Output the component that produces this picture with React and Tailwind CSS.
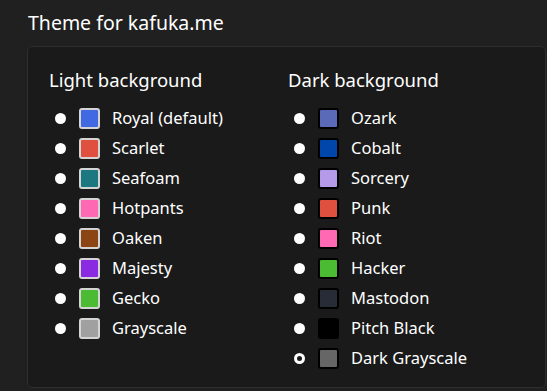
import React from "react";

const light = [
  { name: "Royal (default)", color: "#4169e1" },
  { name: "Scarlet", color: "#e0503f" },
  { name: "Seafoam", color: "#1b7780" },
  { name: "Hotpants", color: "#ff69b4" },
  { name: "Oaken", color: "#8b4513" },
  { name: "Majesty", color: "#8a2be2" },
  { name: "Gecko", color: "#4cbb34" },
  { name: "Grayscale", color: "#a0a0a0" },
];

const dark = [
  { name: "Ozark", color: "#5a69b8" },
  { name: "Cobalt", color: "#0046ab" },
  { name: "Sorcery", color: "#b49ae8" },
  { name: "Punk", color: "#e0503f" },
  { name: "Riot", color: "#ff69b4" },
  { name: "Hacker", color: "#4cbb34" },
  { name: "Mastodon", color: "#282c37" },
  { name: "Pitch Black", color: "#000000" },
  { name: "Dark Grayscale", color: "#666666", selected: true },
];

const Option = ({ item, isDark }) => (
  <div className="flex items-center h-[30px]">
    <div className="w-[24px] flex justify-center ml-[-1px]">
      {item.selected ? (
        <span className="w-[11px] h-[11px] rounded-full border-[3px] border-white bg-[#1a1a1a]" />
      ) : (
        <span className="w-[11px] h-[11px] rounded-full bg-white" />
      )}
    </div>
    <span
      className={`ml-[7px] w-[21px] h-[21px] rounded-[3px] border-2 ${
        isDark ? "border-black" : "border-[#d4d4d4]"
      }`}
      style={{ backgroundColor: item.color }}
    />
    <span className="ml-[12px] text-[16.5px] text-white">{item.name}</span>
  </div>
);

export default function App() {
  return (
    <div
      className="w-[547px] h-[391px] bg-[#202020] overflow-hidden"
      style={{ fontFamily: '"Noto Sans", "Open Sans", sans-serif' }}
    >
      <h1 className="pl-[28px] pt-[8px] h-[46px] text-[19.5px] text-white leading-[30px]">
        Theme for kafuka.me
      </h1>
      <div className="ml-[27px] mr-[1px] h-[342px] bg-[#1a1a1a] border border-[#2e2e2e] rounded-[5px] pl-[21px] pt-[18px]">
        <div className="flex">
          <div className="w-[239px]">
            <h2 className="text-[18.5px] text-white leading-[30px] mb-[8px]">
              Light background
            </h2>
            {light.map((it) => (
              <Option key={it.name} item={it} />
            ))}
          </div>
          <div>
            <h2 className="text-[18.5px] text-white leading-[30px] mb-[8px]">
              Dark background
            </h2>
            {dark.map((it) => (
              <Option key={it.name} item={it} isDark />
            ))}
          </div>
        </div>
      </div>
    </div>
  );
}
